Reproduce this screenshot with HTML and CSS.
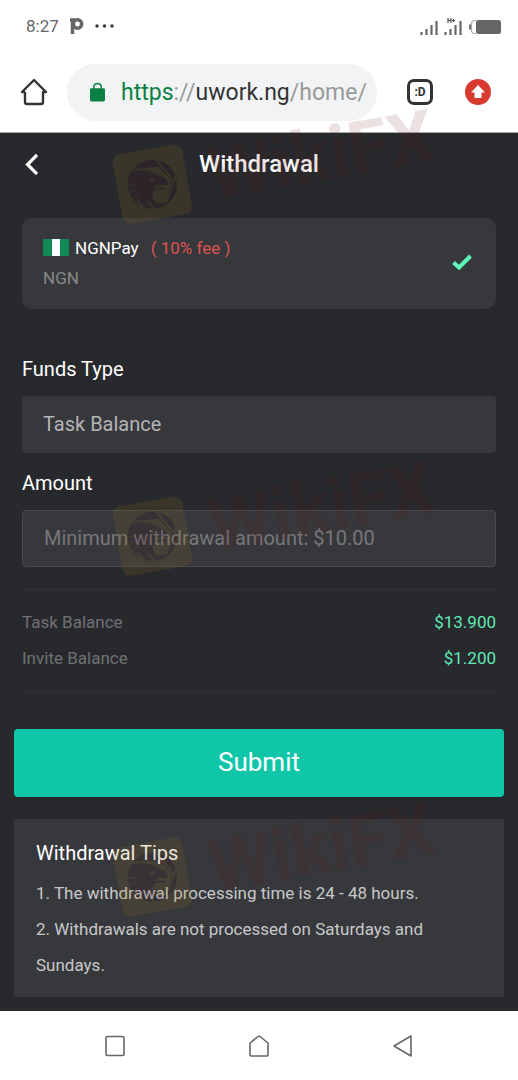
FILE: index.html
```html
<!DOCTYPE html>
<html lang="en">

<head>
    <meta charset="UTF-8">
    <meta name="viewport" content="width=device-width, initial-scale=1.0">
    <title>Withdrawal</title>
    <link rel="stylesheet" href="styles.css">
</head>

<body>
    <svg class="defs" aria-hidden="true">
        <symbol id="eagle" viewBox="0 0 72 72">
            <rect width="72" height="72" rx="9" fill="#93701a" />
            <circle cx="36" cy="36" r="25" fill="#41101a" />
            <path d="M17 18 L46 21 M43 10 L57 35 M62 30 L47 56 M48 56 L36 55 M34 62 L28 52 M23 58 L18 49" fill="none" stroke="#93701a" stroke-width="2" />
            <path d="M24 19 L46 21 L56 36 L47 55 L37 55 C33 51 33 46 37 43 C42 40 46 45 50 43 C46 40 42 41 37 40 C41 37 46 38 51 40 C53 34 49 30 44 29 C39 23 32 21 24 19 Z" fill="#93701a" />
            <path d="M52 34 L56 36 L47 54 L40 54 C46 50 52 44 52 34 Z" fill="#93701a" />
            <path d="M34 30 L41 31 L36 34 Z" fill="#93701a" />
            <path d="M12 32 L19 34 M12 39 L19 39 M15 46 L21 43" fill="none" stroke="#93701a" stroke-width="1" />
        </symbol>
    </svg>

    <div class="status-bar">
        <div class="status-left">
            <span>8:27</span>
            <svg width="14" height="18" viewBox="0 0 14 18">
                <path d="M2.500 17 V3 M0 3 H5" stroke="#666" stroke-width="3.500" fill="none" />
                <circle cx="7.500" cy="7" r="4.200" stroke="#666" stroke-width="3.500" fill="none" />
            </svg>
            <svg width="19" height="4" viewBox="0 0 19 4">
                <circle cx="2" cy="2" r="1.700" fill="#333" />
                <circle cx="9.500" cy="2" r="1.700" fill="#333" />
                <circle cx="17" cy="2" r="1.700" fill="#333" />
            </svg>
        </div>
        <div class="status-right">
            <svg width="18" height="16" viewBox="0 0 18 16">
                <path d="M1.500 16 V13 M6.500 16 V10 M11.500 16 V6 M16.500 16 V2" stroke="#666" stroke-width="2.200" />
            </svg>
            <svg width="18" height="18" viewBox="0 0 18 18">
                <path d="M1.500 18 V15 M6.500 18 V12 M11.500 18 V8 M16.500 18 V4" stroke="#666" stroke-width="2.200" />
                <path d="M4 1 V6 M7 1 V6 M4 3.500 H7 M8 3.500 H11 M9.500 2 V5" stroke="#555" stroke-width="1.200" />
            </svg>
            <svg width="33" height="16" viewBox="0 0 33 16">
                <path d="M8 1.500 H7 Q3.500 1.500 3.500 5 V11 Q3.500 14.500 7 14.500 H8" fill="none" stroke="#aaa" stroke-width="1.200" />
                <path d="M2 5.500 V10.500" stroke="#777" stroke-width="2" />
                <rect x="8" y="1" width="25" height="14" rx="2.500" fill="#666" />
            </svg>
        </div>
    </div>

    <div class="browser-bar">
        <button class="icon-button" aria-label="Home">
            <svg width="28" height="28" viewBox="0 0 28 28">
                <path d="M5 14 V24 Q5 26 7 26 H21 Q23 26 23 24 V14 H26 L14 2 L2 14 H5" fill="none" stroke="#333" stroke-width="2.400" stroke-linejoin="round" />
            </svg>
        </button>
        <a class="address" href="#">
            <svg width="15" height="20" viewBox="0 0 16 20">
                <rect x="0" y="6" width="16" height="14" rx="1.500" fill="#0b8043" />
                <path d="M4 8 V5 Q4 1 8 1 Q12 1 12 5 V8" fill="none" stroke="#0b8043" stroke-width="1.600" />
            </svg>
            <span class="url"><span class="secure">https</span>://<span class="host">uwork.ng</span>/home/</span>
        </a>
        <button class="icon-button tabs" aria-label="Tabs">:D</button>
        <button class="icon-button" aria-label="Update">
            <svg width="26" height="26" viewBox="0 0 26 26">
                <circle cx="13" cy="13" r="13" fill="#d93a2f" />
                <path d="M13 6 L20 13.500 H16.500 V19 H9.500 V13.500 H6 Z" fill="#fff" />
            </svg>
        </button>
    </div>

    <main>
        <header>
            <a class="back" href="#" aria-label="Back">
                <svg width="14" height="22" viewBox="0 0 14 22">
                    <path d="M13 2 L3.500 11.500 L13 21" fill="none" stroke="#fff" stroke-width="3.200" />
                </svg>
            </a>
            <h1>Withdrawal</h1>
        </header>

        <form>
            <div class="card">
                <div>
                    <div class="method">
                        <svg width="26" height="17" viewBox="0 0 26 17">
                            <rect width="26" height="17" fill="#128a56" />
                            <rect x="9" width="8" height="17" fill="#fff" />
                        </svg>
                        <span>NGNPay</span>
                        <span class="fee">( 10% fee )</span>
                    </div>
                    <div class="currency">NGN</div>
                </div>
                <svg width="20" height="17" viewBox="0 0 20 17">
                    <path d="M1.500 8.500 L7 13.500 L18.500 2" fill="none" stroke="#5df5b8" stroke-width="4" />
                </svg>
            </div>

            <label for="funds">Funds Type</label>
            <select id="funds" class="field">
                <option>Task Balance</option>
            </select>

            <label for="amount">Amount</label>
            <input id="amount" class="field bordered" type="text" placeholder="Minimum withdrawal amount: $10.00">

            <dl class="balances">
                <div>
                    <dt>Task Balance</dt>
                    <dd>$13.900</dd>
                </div>
                <div>
                    <dt>Invite Balance</dt>
                    <dd>$1.200</dd>
                </div>
            </dl>

            <button type="button" class="submit">Submit</button>
        </form>

        <section class="tips">
            <h2>Withdrawal Tips</h2>
            <p>1. The withdrawal processing time is 24 - 48 hours.</p>
            <p>2. Withdrawals are not processed on Saturdays and Sundays.</p>
        </section>
    </main>

    <nav>
        <button class="icon-button" aria-label="Recent apps">
            <svg width="22" height="22" viewBox="0 0 22 22">
                <rect x="2" y="1.500" width="18" height="19" rx="1.500" fill="none" stroke="#666" stroke-width="1.600" />
            </svg>
        </button>
        <button class="icon-button" aria-label="Home screen">
            <svg width="22" height="22" viewBox="0 0 22 22">
                <path d="M2 8 L10 1.500 Q11 1 12 1.500 L20 8 V20 Q20 21 19 21 H3 Q2 21 2 20 Z" fill="none" stroke="#666" stroke-width="1.600" stroke-linejoin="round" />
            </svg>
        </button>
        <button class="icon-button" aria-label="Go back">
            <svg width="22" height="22" viewBox="0 0 22 22">
                <path d="M19 1 V21 L2 11 Z" fill="none" stroke="#666" stroke-width="1.600" stroke-linejoin="round" />
            </svg>
        </button>
    </nav>

    <div class="watermark mark-top" aria-hidden="true"><svg><use href="#eagle" /></svg>WikiFX</div>
    <div class="watermark mark-middle" aria-hidden="true"><svg><use href="#eagle" /></svg>WikiFX</div>
    <div class="watermark mark-bottom" aria-hidden="true"><svg><use href="#eagle" /></svg>WikiFX</div>
</body>

</html>
```
FILE: styles.css
```css
* {
    box-sizing: border-box;
}

body {
    font-family: Roboto, "Liberation Sans", sans-serif;
    margin: 0;
    min-height: 100vh;
    display: flex;
    flex-direction: column;
    position: relative;
    background-color: #fff;
}

svg {
    display: block;
    flex-shrink: 0;
}

.defs {
    position: absolute;
    width: 0;
    height: 0;
}

.status-bar {
    display: flex;
    justify-content: space-between;
    align-items: center;
    height: 52px;
    padding: 0 17px 0 26px;
    font-size: 17px;
    color: #666;
}

.status-left {
    display: flex;
    align-items: center;
    gap: 11px;
}

.status-right {
    display: flex;
    align-items: flex-end;
    gap: 6px;
}

.icon-button {
    border: none;
    background: none;
    padding: 0;
    cursor: pointer;
}

.browser-bar {
    display: flex;
    align-items: center;
    height: 81px;
    padding: 0 27px 0 20px;
    border-bottom: 1px solid #aaa;
}

.address {
    display: flex;
    align-items: center;
    flex: 1;
    min-width: 0;
    height: 57px;
    margin: 0 30px 0 19px;
    padding: 0 8px 0 23px;
    gap: 16px;
    border-radius: 29px;
    background-color: #f1f3f4;
    font-size: 23px;
    line-height: 32px;
    color: #999;
    text-decoration: none;
}

.url {
    overflow: hidden;
    white-space: nowrap;
    padding-top: 2px;
}

.secure {
    color: #0b8043;
}

.host {
    color: #333;
}

.tabs {
    width: 26px;
    height: 26px;
    margin-right: 32px;
    border: 3px solid #333;
    border-radius: 7px;
    font-family: Roboto, sans-serif;
    font-size: 12px;
    font-weight: bold;
    color: #333;
}

main {
    flex: 1;
    padding: 0 14px 14px;
    background-color: #28292d;
    color: #fff;
}

header {
    display: grid;
    grid-template-columns: 24px 1fr 24px;
    align-items: center;
    height: 61px;
    padding: 0 10px;
}

h1 {
    margin: 0;
    font-size: 24px;
    font-weight: 500;
    text-align: center;
}

form {
    display: flex;
    flex-direction: column;
}

.card {
    display: flex;
    justify-content: space-between;
    align-items: center;
    height: 91px;
    margin: 24px 8px 44px;
    padding: 0 24px 2px 21px;
    border-radius: 10px;
    background-color: #37383c;
}

.method {
    display: flex;
    align-items: center;
    gap: 6px;
    font-size: 17px;
    line-height: 30px;
}

.fee {
    margin-left: 6px;
    color: #dc5450;
}

.currency {
    font-size: 17px;
    line-height: 30px;
    color: #888;
}

label {
    margin: 0 8px;
    font-size: 20px;
    line-height: 32px;
}

.field {
    appearance: none;
    height: 57px;
    margin: 11px 8px 14px;
    padding: 0 21px 2px;
    border: none;
    border-radius: 4px;
    background-color: #37383c;
    font-family: inherit;
    font-size: 20px;
    color: #b4b4b6;
}

.bordered {
    border: 1px solid #48494d;
}

.field::placeholder {
    color: #77777a;
}

.balances {
    margin: 8px 8px 36px;
    padding: 14px 0 16px;
    border-top: 1px solid #323337;
    border-bottom: 1px solid #323337;
    font-size: 17px;
    line-height: 36px;
}

.balances div {
    display: flex;
    justify-content: space-between;
}

dt {
    color: #707173;
}

dd {
    margin: 0;
    color: #5eeab5;
}

.submit {
    height: 68px;
    padding: 0 0 3px;
    border: none;
    border-radius: 4px;
    background-color: #0fc6a9;
    font-family: inherit;
    font-size: 26px;
    color: #fff;
    cursor: pointer;
}

.tips {
    margin-top: 22px;
    padding: 16px 22px 14px;
    background-color: #37383c;
    color: #c8c8ca;
    font-size: 17px;
    line-height: 36px;
}

.tips h2 {
    margin: 0 0 4px;
    font-size: 20px;
    font-weight: normal;
    color: #fff;
}

.tips p {
    margin: 0;
}

nav {
    display: flex;
    justify-content: space-between;
    align-items: center;
    height: 69px;
    padding: 0 20%;
}

/* marks printed over the page */
.watermark {
    position: absolute;
    left: 115px;
    display: flex;
    align-items: center;
    gap: 22px;
    height: 71px;
    font-size: 73px;
    font-weight: bold;
    color: rgba(96, 24, 20, 0.75);
    opacity: 0.17;
    transform: rotate(-10deg);
    pointer-events: none;
}

.watermark svg {
    width: 71px;
    height: 71px;
}

.mark-top {
    top: 127px;
}

.mark-middle {
    top: 479px;
}

.mark-bottom {
    top: 820px;
}
```
